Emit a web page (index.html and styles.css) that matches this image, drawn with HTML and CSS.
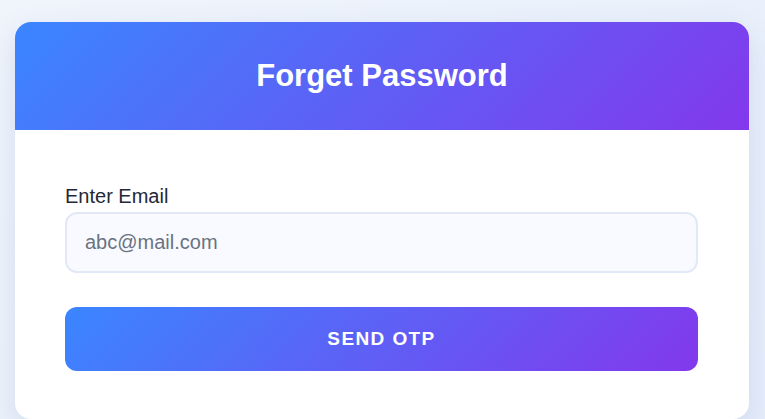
FILE: index.html
```html
<!DOCTYPE html>
<html>
<head>
<meta charset="utf-8">
<link rel="stylesheet" href="styles.css">
</head>
<body>
<div class="page">
  <div class="card">
    <div class="card-header">
      <h1 class="title">Forget Password</h1>
    </div>
    <div class="card-body">
      <label class="label" for="email">Enter Email</label>
      <input class="input" id="email" type="email" placeholder="abc@mail.com">
      <button class="btn">SEND OTP</button>
    </div>
  </div>
</div>
</body>
</html>
```

FILE: styles.css
```css
* { box-sizing: border-box; }
html, body { margin: 0; height: 100%; }
body {
  font-family: "Liberation Sans", Arial, sans-serif;
  background: linear-gradient(135deg, #f0f5fc 0%, #e6eefb 100%);
  overflow: hidden;
}
.page {
  padding: 22px 16px 0 15px;
}
.card {
  width: 734px;
  background: #ffffff;
  border-radius: 16px;
  overflow: hidden;
  box-shadow: 0 10px 30px rgba(59, 90, 160, 0.15);
}
.card-header {
  height: 108px;
  display: flex;
  align-items: center;
  justify-content: center;
  background: linear-gradient(135deg, #3a86ff 0%, #8338ec 100%);
}
.title {
  margin: 0;
  color: #ffffff;
  font-size: 31px;
  font-weight: 700;
}
.card-body {
  display: flex;
  flex-direction: column;
  padding: 55px 51px 48px 50px;
}
.label {
  font-size: 20px;
  color: #1f2937;
  line-height: 23px;
  margin-bottom: 4px;
}
.input {
  height: 61px;
  padding: 0 18px;
  font-family: inherit;
  font-size: 20px;
  color: #1f2937;
  background: #f8faff;
  border: 2px solid #e3e8f8;
  border-radius: 12px;
  outline: none;
}
.input::placeholder { color: #6b7280; }
.btn {
  margin-top: 34px;
  height: 64px;
  border: none;
  border-radius: 12px;
  background: linear-gradient(135deg, #3a86ff 0%, #8338ec 100%);
  color: #ffffff;
  font-family: inherit;
  font-size: 19px;
  font-weight: 700;
  letter-spacing: 1.4px;
  cursor: pointer;
}
```
